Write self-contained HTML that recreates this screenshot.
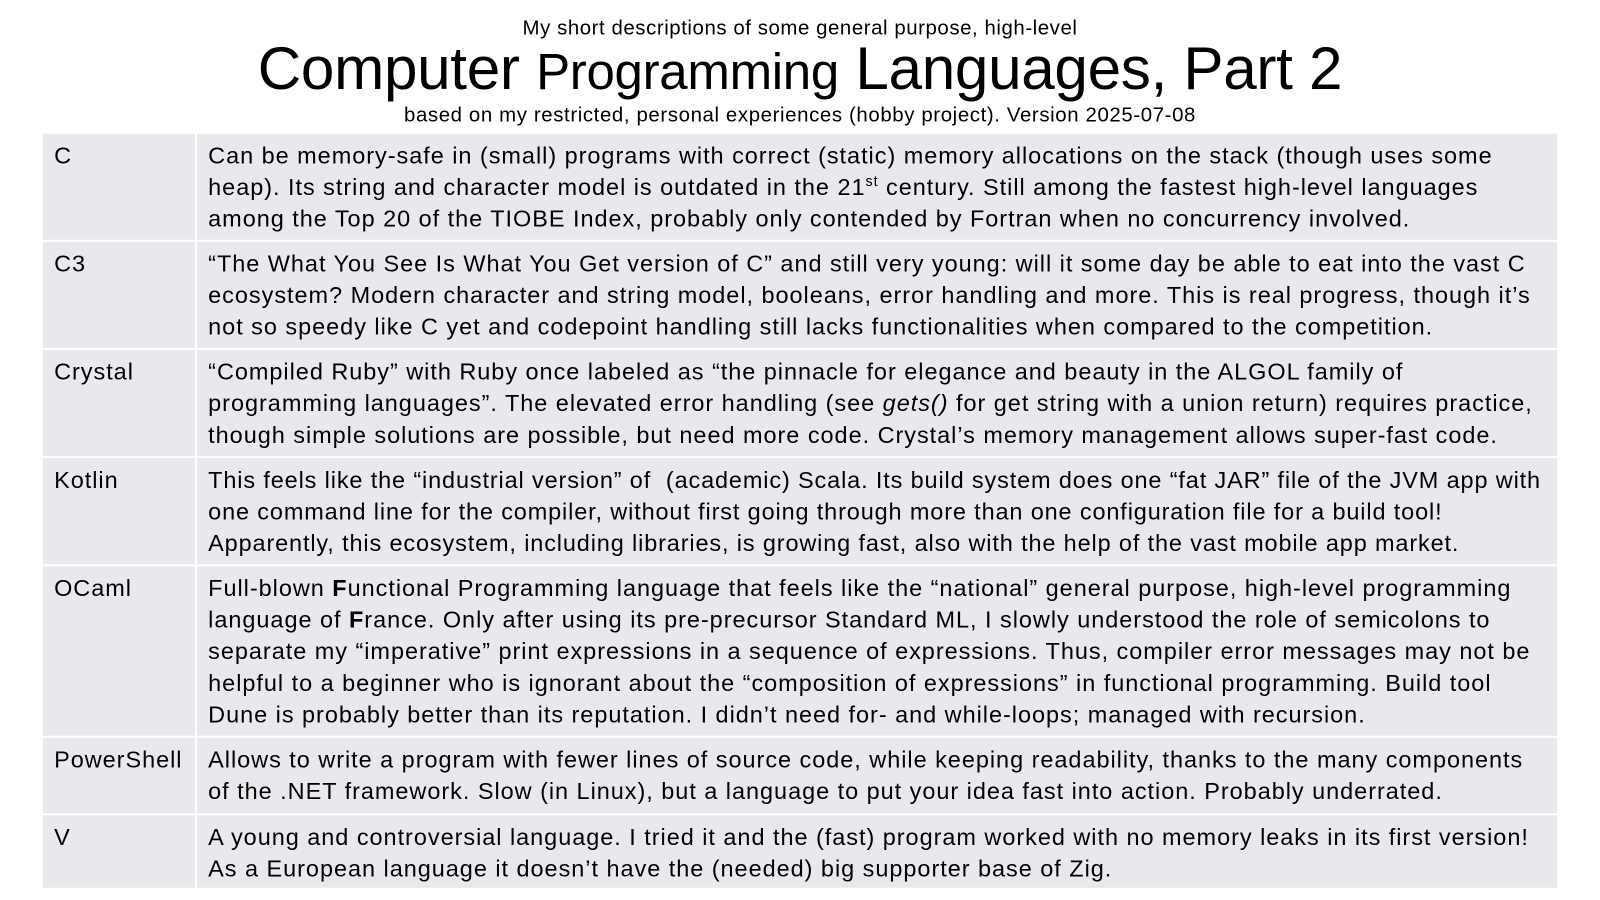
<!DOCTYPE html>
<html><head><meta charset="utf-8"><style>
body{margin:0;width:1600px;height:900px;background:#fff;overflow:hidden}
#w{position:absolute;left:0;top:0;width:1568px;height:882px;transform:scale(1.0204);transform-origin:0 0;font-family:"Liberation Sans",sans-serif;color:#000}
.h1{position:absolute;top:17px;left:0;width:1568px;text-align:center;font-size:20px;letter-spacing:0.55px}
.h2{position:absolute;top:33px;left:0;width:1568px;text-align:center;font-size:59px;line-height:68px;letter-spacing:-0.3px}
.h2 span{font-size:50px}
.h3{position:absolute;top:102px;left:0;width:1568px;text-align:center;font-size:20px;letter-spacing:0.6px}
.row{position:absolute;left:42px;width:1484px}
.c1,.c2{position:absolute;top:0;bottom:0;background:#e7e9ed}
.c1{left:0;width:149px;padding:6px 0 0 11px;box-sizing:border-box}
.c2{left:151px;right:0;padding:6px 0 0 11px;box-sizing:border-box}
.c1,.c2{font-size:23px;line-height:31px;white-space:nowrap;letter-spacing:0.95px}
sup{font-size:14px;line-height:0}
</style></head><body><div id="w">
<div class="h1">My short descriptions of some general purpose, high-level</div>
<div class="h2">Computer <span>Programming</span> Languages, Part 2</div>
<div class="h3">based on my restricted, personal experiences (hobby project). Version 2025-07-08</div>

<div class="row" style="top:131px;height:104px"><div class="c1">C</div><div class="c2">Can be memory-safe in (small) programs with correct (static) memory allocations on the stack (though uses some<br>heap). Its string and character model is outdated in the 21<sup>st</sup> century. Still among the fastest high-level languages<br>among the Top 20 of the TIOBE Index, probably only contended by Fortran when no concurrency involved.</div></div>
<div class="row" style="top:237px;height:104px"><div class="c1">C3</div><div class="c2">“The What You See Is What You Get version of C” and still very young: will it some day be able to eat into the vast C<br>ecosystem? Modern character and string model, booleans, error handling and more. This is real progress, though it’s<br>not so speedy like C yet and codepoint handling still lacks functionalities when compared to the competition.</div></div>
<div class="row" style="top:343px;height:104px"><div class="c1">Crystal</div><div class="c2">“Compiled Ruby” with Ruby once labeled as “the pinnacle for elegance and beauty in the ALGOL family of<br>programming languages”. The elevated error handling (see <i>gets()</i> for get string with a union return) requires practice,<br>though simple solutions are possible, but need more code. Crystal’s memory management allows super-fast code.</div></div>
<div class="row" style="top:449px;height:104px"><div class="c1">Kotlin</div><div class="c2" style="letter-spacing:0.85px">This feels like the “industrial version” of &nbsp;(academic) Scala. Its build system does one “fat JAR” file of the JVM app with<br>one command line for the compiler, without first going through more than one configuration file for a build tool!<br>Apparently, this ecosystem, including libraries, is growing fast, also with the help of the vast mobile app market.</div></div>
<div class="row" style="top:555px;height:166px"><div class="c1">OCaml</div><div class="c2">Full-blown <b>F</b>unctional Programming language that feels like the “national” general purpose, high-level programming<br>language of <b>F</b>rance. Only after using its pre-precursor Standard ML, I slowly understood the role of semicolons to<br>separate my “imperative” print expressions in a sequence of expressions. Thus, compiler error messages may not be<br>helpful to a beginner who is ignorant about the “composition of expressions” in functional programming. Build tool<br>Dune is probably better than its reputation. I didn’t need for- and while-loops; managed with recursion.</div></div>
<div class="row" style="top:723px;height:74px"><div class="c1">PowerShell</div><div class="c2">Allows to write a program with fewer lines of source code, while keeping readability, thanks to the many components<br>of the .NET framework. Slow (in Linux), but a language to put your idea fast into action. Probably underrated.</div></div>
<div class="row" style="top:799px;height:71px"><div class="c1">V</div><div class="c2">A young and controversial language. I tried it and the (fast) program worked with no memory leaks in its first version!<br>As a European language it doesn’t have the (needed) big supporter base of Zig.</div></div>
</div></body></html>
